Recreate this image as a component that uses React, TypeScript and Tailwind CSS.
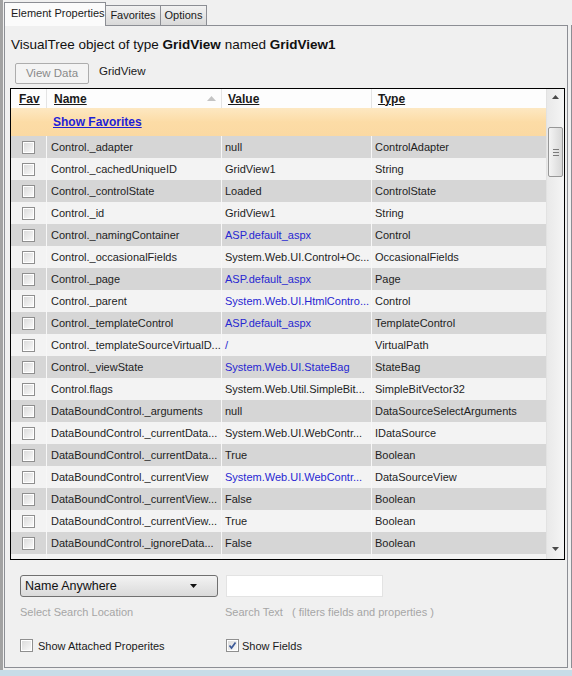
import React from 'react'

type Row = { name: string; value: string; type: string; link?: boolean }

const rows: Row[] = [
  { name: 'Control._adapter', value: 'null', type: 'ControlAdapter' },
  { name: 'Control._cachedUniqueID', value: 'GridView1', type: 'String' },
  { name: 'Control._controlState', value: 'Loaded', type: 'ControlState' },
  { name: 'Control._id', value: 'GridView1', type: 'String' },
  { name: 'Control._namingContainer', value: 'ASP.default_aspx', type: 'Control', link: true },
  { name: 'Control._occasionalFields', value: 'System.Web.UI.Control+Oc...', type: 'OccasionalFields' },
  { name: 'Control._page', value: 'ASP.default_aspx', type: 'Page', link: true },
  { name: 'Control._parent', value: 'System.Web.UI.HtmlContro...', type: 'Control', link: true },
  { name: 'Control._templateControl', value: 'ASP.default_aspx', type: 'TemplateControl', link: true },
  { name: 'Control._templateSourceVirtualD...', value: '/', type: 'VirtualPath', link: true },
  { name: 'Control._viewState', value: 'System.Web.UI.StateBag', type: 'StateBag', link: true },
  { name: 'Control.flags', value: 'System.Web.Util.SimpleBit...', type: 'SimpleBitVector32' },
  { name: 'DataBoundControl._arguments', value: 'null', type: 'DataSourceSelectArguments' },
  { name: 'DataBoundControl._currentData...', value: 'System.Web.UI.WebContr...', type: 'IDataSource' },
  { name: 'DataBoundControl._currentData...', value: 'True', type: 'Boolean' },
  { name: 'DataBoundControl._currentView', value: 'System.Web.UI.WebContr...', type: 'DataSourceView', link: true },
  { name: 'DataBoundControl._currentView...', value: 'False', type: 'Boolean' },
  { name: 'DataBoundControl._currentView...', value: 'True', type: 'Boolean' },
  { name: 'DataBoundControl._ignoreData...', value: 'False', type: 'Boolean' },
  { name: '', value: '', type: '' },
]

function CheckBox({ checked = false }: { checked?: boolean }) {
  return (
    <span className="relative inline-flex h-[13px] w-[13px] shrink-0 border border-[#8f8f8f] bg-white p-px">
      <span className="block h-full w-full bg-gradient-to-br from-[#dcdcdc] to-[#f8f8f8]" />
      {checked && (
        <svg className="absolute left-0 top-0" width="11" height="11" viewBox="0 0 11 11">
          <path d="M2.5 5.5 L4.5 8 L8.5 2.5" fill="none" stroke="#3d5a98" strokeWidth="1.7" />
        </svg>
      )}
    </span>
  )
}

function GridRow({ row, index }: { row: Row; index: number }) {
  const shade = index % 2 === 0 ? 'bg-[#d6d6d6]' : 'bg-[#f3f3f3]'
  return (
    <div className={`flex h-[22px] shrink-0 items-center ${shade}`}>
      <div className="flex h-full w-[36px] items-center justify-center border-r border-[#f7f7f7]">
        <CheckBox />
      </div>
      <div className="flex h-full w-[175px] items-center border-r border-[#f7f7f7] pl-[4px] text-[#1e1e1e]">
        {row.name}
      </div>
      <div
        className={`flex h-full w-[150px] items-center border-r border-[#f7f7f7] pl-[3px] ${
          row.link ? 'text-[#2727d2]' : 'text-[#1e1e1e]'
        }`}
      >
        {row.value}
      </div>
      <div className="flex h-full flex-1 items-center pl-[3px] text-[#1e1e1e]">{row.type}</div>
    </div>
  )
}

function ScrollBar() {
  return (
    <div className="flex w-[18px] shrink-0 flex-col items-center bg-gradient-to-r from-[#e9e9e9] to-[#f5f5f5] border-l border-[#e2e2e2]">
      <svg className="mt-[6px]" width="7" height="4" viewBox="0 0 7 4">
        <path d="M0 4 L3.5 0 L7 4 Z" fill="#4a4a4a" />
      </svg>
      <div className="mt-[28px] flex h-[50px] w-[15px] flex-col items-center justify-center gap-[2px] rounded-[2px] border border-[#979797] bg-gradient-to-r from-[#f4f4f4] to-[#d8d8d8]">
        <span className="block h-px w-[6px] bg-[#7a7a7a]" />
        <span className="block h-px w-[6px] bg-[#7a7a7a]" />
        <span className="block h-px w-[6px] bg-[#7a7a7a]" />
      </div>
      <div className="flex-1" />
      <svg className="mb-[8px]" width="7" height="4" viewBox="0 0 7 4">
        <path d="M0 0 L3.5 4 L7 0 Z" fill="#4a4a4a" />
      </svg>
    </div>
  )
}

export default function App() {
  return (
    <div
      className="flex h-[676px] w-[572px] flex-col bg-[#f0f0f0] text-[11px]"
      style={{ fontFamily: '"Liberation Sans", Arial, sans-serif' }}
    >
      <div className="flex flex-1 border-l-[3px] border-[#a2a2a2]">
        <div className="flex flex-1 flex-col pt-[2px]">
          {/* Tabs */}
          <div className="flex h-[23px] items-end pl-[1px] whitespace-nowrap text-[11px] text-[#1a1a1a]">
            <div className="relative z-10 -mb-px flex h-[24px] w-[102px] items-center border border-b-0 border-[#8c8e94] bg-[#fbfbfb] pb-[3px] pl-[6px]">
              Element Properties
            </div>
            <div className="flex h-[20px] w-[55px] items-center justify-center border border-l-0 border-b-0 border-[#8c8e94] bg-gradient-to-b from-[#f2f2f2] to-[#d9d9d9]">
              Favorites
            </div>
            <div className="flex h-[20px] w-[46px] items-center justify-center border border-l-0 border-b-0 border-[#8c8e94] bg-gradient-to-b from-[#f2f2f2] to-[#d9d9d9]">
              Options
            </div>
          </div>

          {/* Tab page */}
          <div className="flex flex-1 flex-col">
            <div className="flex h-[643px]">
              <div className="ml-px flex w-[564px] flex-col border border-[#8c8e94] bg-[#f0f0f0] pl-[5px] pr-[2px]">
                <div className="mt-[10px] h-[18px] pl-[1px] text-[13.5px] leading-[18px] text-[#111]">
                  VisualTree object of type <b>GridView</b> named <b>GridView1</b>
                </div>

                <div className="mt-[9px] flex items-center">
                  <button className="ml-[5px] h-[21px] w-[74px] rounded-[2px] border border-[#adadad] bg-[#f4f4f4] text-[11.5px] text-[#8a8a8a]">
                    View Data
                  </button>
                  <span className="-mt-[3px] ml-[10px] text-[11.5px] text-[#1a1a1a]">GridView</span>
                </div>

                {/* Grid */}
                <div className="mt-[4px] flex h-[472px] w-[555px] border border-black bg-white">
                  <div className="flex flex-1 flex-col overflow-hidden">
                    <div className="flex h-[19px] shrink-0 items-center bg-[#fdfdfd] text-[12px] font-bold text-[#1a1a1a]">
                      <div className="flex h-full w-[36px] items-center border-r border-[#e4e4e4] pl-[8px] underline">
                        Fav
                      </div>
                      <div className="flex h-full w-[175px] items-center border-r border-[#e4e4e4] pl-[7px]">
                        <span className="flex-1 underline">Name</span>
                        <svg className="mr-[5px]" width="9" height="5" viewBox="0 0 9 5">
                          <path d="M0 5 L4.5 0 L9 5 Z" fill="#c4c4c4" />
                        </svg>
                      </div>
                      <div className="flex h-full w-[150px] items-center border-r border-[#e4e4e4] pl-[6px] underline">
                        Value
                      </div>
                      <div className="flex h-full flex-1 items-center pl-[6px] underline">Type</div>
                    </div>
                    <div className="flex h-[28px] shrink-0 items-center bg-gradient-to-b from-[#fde8c2] via-[#fcdca6] to-[#fbd9a2] pl-[42px] text-[12px] font-bold text-[#1f1fd6] underline">
                      Show Favorites
                    </div>
                    {rows.map((r, i) => (
                      <GridRow key={i} row={r} index={i} />
                    ))}
                  </div>
                  <ScrollBar />
                </div>

                {/* Search */}
                <div className="mt-[15px] flex items-start pl-[10px]">
                  <div className="flex h-[22px] w-[198px] items-center rounded-[3px] border border-[#707070] bg-gradient-to-b from-[#f3f3f3] to-[#dadada] pl-[4px] pr-[20px] text-[12.5px] text-[#111]">
                    <span className="flex-1">Name Anywhere</span>
                    <svg width="7" height="4" viewBox="0 0 7 4">
                      <path d="M0 0 L3.5 4 L7 0 Z" fill="#111" />
                    </svg>
                  </div>
                  <div className="ml-[8px] h-[22px] w-[157px] border border-[#e3e3e3] bg-white" />
                </div>

                <div className="mt-[7px] flex pl-[10px] text-[11px] text-[#a6a6a6]">
                  <span className="w-[205px]">Select Search Location</span>
                  <span>Search Text &nbsp;&nbsp;( filters fields and properties )</span>
                </div>

                <div className="mt-[17px] flex items-center pl-[10px] text-[11px] text-[#1a1a1a]">
                  <div className="flex w-[206px] items-center gap-[5px]">
                    <CheckBox />
                    <span>Show Attached Properites</span>
                  </div>
                  <div className="flex items-center gap-[3px]">
                    <CheckBox checked />
                    <span>Show Fields</span>
                  </div>
                </div>
              </div>
              <div className="w-[3px]" />
              <div className="w-px bg-[#8c8e94]" />
            </div>
          </div>
        </div>
      </div>
      <div className="h-[6px] bg-[#c7dce8]" />
    </div>
  )
}
